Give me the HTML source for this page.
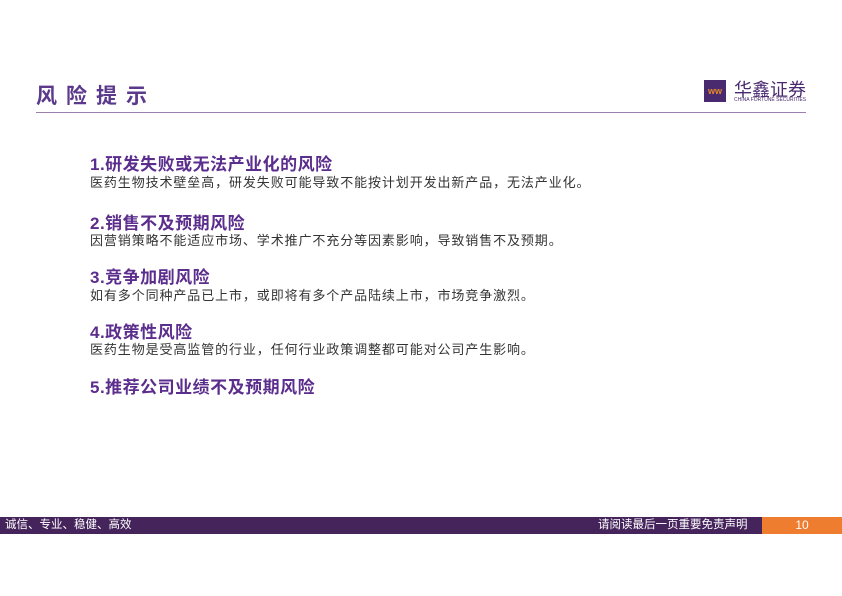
<!DOCTYPE html>
<html><head><meta charset="utf-8"><style>
body{margin:0;width:842px;height:596px;background:#fff;position:relative;font-family:"Liberation Sans","Noto Sans CJK SC",sans-serif;overflow:hidden}
.a{position:absolute;white-space:nowrap}
.t{left:36px;top:80px;font-size:21px;font-weight:bold;color:#5b3a8c;letter-spacing:9px}
.line{left:36px;top:112px;width:770px;height:1px;background:#9a80b0}
.h{left:90px;font-size:17px;font-weight:bold;color:#5b2d8c;letter-spacing:0.5px}
.b{left:90px;font-size:13px;color:#333;letter-spacing:0.9px}
.bar{left:0;top:517px;width:762px;height:17px;background:#45245c}
.org{left:762px;top:517px;width:80px;height:17px;background:#ee7d30;color:#fff;font-size:12px;text-align:center;line-height:17px}
.ft{font-size:11.5px;color:#fff;top:517px;line-height:17px}
</style></head><body>
<div class="a t">风险提示</div>
<div class="a line"></div>
<div class="a" style="left:704px;top:80px;width:22px;height:22px;background:#4a2a6e;color:#e88a2a;font-size:9px;font-weight:bold;text-align:center;line-height:22px">ww</div>
<div class="a" style="left:734px;top:76px;font-size:18px;color:#4a2a6e;letter-spacing:0px">华鑫证券</div>
<div class="a" style="left:734px;top:97px;font-size:5px;color:#4a2a6e">CHINA FORTUNE SECURITIES</div>
<div class="a h" style="top:150px">1.研发失败或无法产业化的风险</div>
<div class="a b" style="top:172px">医药生物技术壁垒高，研发失败可能导致不能按计划开发出新产品，无法产业化。</div>
<div class="a h" style="top:209px">2.销售不及预期风险</div>
<div class="a b" style="top:230px">因营销策略不能适应市场、学术推广不充分等因素影响，导致销售不及预期。</div>
<div class="a h" style="top:263px">3.竞争加剧风险</div>
<div class="a b" style="top:285px">如有多个同种产品已上市，或即将有多个产品陆续上市，市场竞争激烈。</div>
<div class="a h" style="top:318px">4.政策性风险</div>
<div class="a b" style="top:339px">医药生物是受高监管的行业，任何行业政策调整都可能对公司产生影响。</div>
<div class="a h" style="top:373px">5.推荐公司业绩不及预期风险</div>
<div class="a bar"></div>
<div class="a org">10</div>
<div class="a ft" style="left:5px">诚信、专业、稳健、高效</div>
<div class="a ft" style="left:598px">请阅读最后一页重要免责声明</div>
</body></html>
